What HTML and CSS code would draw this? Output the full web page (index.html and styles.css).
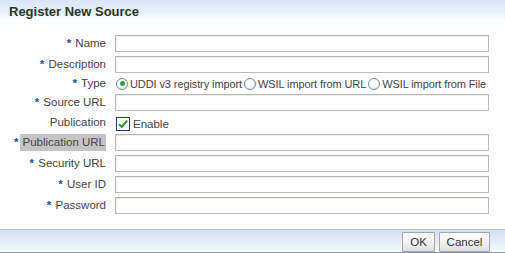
FILE: index.html
```html
<!DOCTYPE html>
<html>
<head>
<meta charset="utf-8">
<link rel="stylesheet" href="styles.css">
</head>
<body>
<div class="dialog">
  <div class="header">Register New Source</div>
  <div class="form">
    <div class="row">
      <div class="label"><span class="req">*</span> Name</div>
      <div class="input"></div>
    </div>
    <div class="row">
      <div class="label"><span class="req">*</span> Description</div>
      <div class="input"></div>
    </div>
    <div class="row row-type">
      <div class="label"><span class="req">*</span> Type</div>
      <div class="radios">
        <span class="radio checked"></span><span class="opt">UDDI v3 registry import</span>
        <span class="radio"></span><span class="opt">WSIL import from URL</span>
        <span class="radio"></span><span class="opt">WSIL import from File</span>
      </div>
    </div>
    <div class="row">
      <div class="label"><span class="req">*</span> Source URL</div>
      <div class="input"></div>
    </div>
    <div class="row row-pub">
      <div class="label">Publication</div>
      <div class="check-wrap">
        <span class="checkbox"><svg width="12" height="12" viewBox="0 0 12 12"><path d="M2 6.2 L4.8 9 L10.2 2.6" fill="none" stroke="#2f9a2f" stroke-width="2.2"/></svg></span><span class="opt">Enable</span>
      </div>
    </div>
    <div class="row">
      <div class="label"><span class="req">*</span><span class="hl">Publication URL</span></div>
      <div class="input"></div>
    </div>
    <div class="row">
      <div class="label"><span class="req">*</span> Security URL</div>
      <div class="input"></div>
    </div>
    <div class="row">
      <div class="label"><span class="req">*</span> User ID</div>
      <div class="input"></div>
    </div>
    <div class="row">
      <div class="label"><span class="req">*</span> Password</div>
      <div class="input"></div>
    </div>
  </div>
  <div class="footer">
    <button class="btn btn-ok">OK</button>
    <button class="btn btn-cancel">Cancel</button>
  </div>
</div>
</body>
</html>
```
FILE: styles.css
```css
html, body {
  margin: 0;
  padding: 0;
  background: #ffffff;
}
body {
  font-family: "Liberation Sans", Arial, sans-serif;
  font-size: 11.5px;
  color: #444444;
}
.dialog {
  width: 505px;
  height: 253px;
  display: flex;
  flex-direction: column;
}
.header {
  height: 22px;
  box-sizing: border-box;
  padding: 5px 0 0 9px;
  font-size: 13px;
  font-weight: bold;
  color: #283828;
  line-height: 13px;
  background: linear-gradient(to bottom, #d9e5f7 0%, #e8eff9 60%, #ffffff 100%);
}
.form {
  padding-top: 12px;
  display: flex;
  flex-direction: column;
  height: 192px;
}
.row {
  display: grid;
  grid-template-columns: 106px 374px;
  column-gap: 9px;
  align-items: center;
  height: 21px;
}
.row-type { height: 17px; }
.row-pub { height: 19px; }
.label {
  text-align: right;
  white-space: nowrap;
  line-height: 17px;
}
.req {
  color: #1a4fa0;
  font-weight: bold;
  margin-right: 1px;
}
.hl {
  background: #c4c4c4;
  padding: 2px 1px 3px 3px;
  margin-right: 0;
}
.input {
  height: 17px;
  box-sizing: border-box;
  border: 1px solid #bdbdb5;
  border-top-color: #b6b6ae;
  background: #ffffff;
  box-shadow: inset 1px 1px 0 #eeeeea;
}
.radios {
  display: flex;
  align-items: center;
  margin-left: 1px;
  white-space: nowrap;
  font-size: 11px;
  letter-spacing: -0.1px;
}
.radio {
  flex-shrink: 0;
  width: 12px;
  height: 12px;
  box-sizing: border-box;
  border: 1px solid #6f87a8;
  border-radius: 50%;
  background: radial-gradient(circle at 40% 40%, #ffffff 0%, #ffffff 40%, #e2e6ea 100%);
  display: inline-flex;
  align-items: center;
  justify-content: center;
  margin-right: 2px;
}
.radio.checked::after {
  content: "";
  width: 5px;
  height: 5px;
  border-radius: 50%;
  background: #2fa33a;
}
.opt {
  margin-right: 2px;
}
.check-wrap {
  display: flex;
  align-items: center;
  margin-left: 1px;
  padding-top: 2px;
}
.checkbox {
  flex-shrink: 0;
  width: 14px;
  height: 14px;
  box-sizing: border-box;
  border: 1px solid #1d3f7a;
  background: #ffffff;
  display: inline-flex;
  align-items: center;
  justify-content: center;
  margin-right: 3px;
}
.footer {
  margin-top: 9px;
  height: 25px;
  box-sizing: border-box;
  border-top: 1px solid #a9c1e8;
  border-bottom: 1px solid #8797b0;
  background: linear-gradient(to bottom, #d3e0f5 0%, #e6eefa 60%, #f6f9fe 100%);
  display: flex;
  justify-content: flex-end;
  align-items: flex-start;
  padding: 2px 15px 0 0;
  gap: 4px;
}
.btn {
  font-family: "Liberation Sans", Arial, sans-serif;
  font-size: 11.5px;
  color: #333333;
  height: 20px;
  box-sizing: border-box;
  border: 1px solid #a6a6a6;
  border-radius: 1px;
  background: linear-gradient(to bottom, #ffffff 0%, #f4f4f4 50%, #dedede 100%);
  padding: 0;
  margin: 0;
}
.btn-ok { width: 33px; }
.btn-cancel { width: 51px; }
```
